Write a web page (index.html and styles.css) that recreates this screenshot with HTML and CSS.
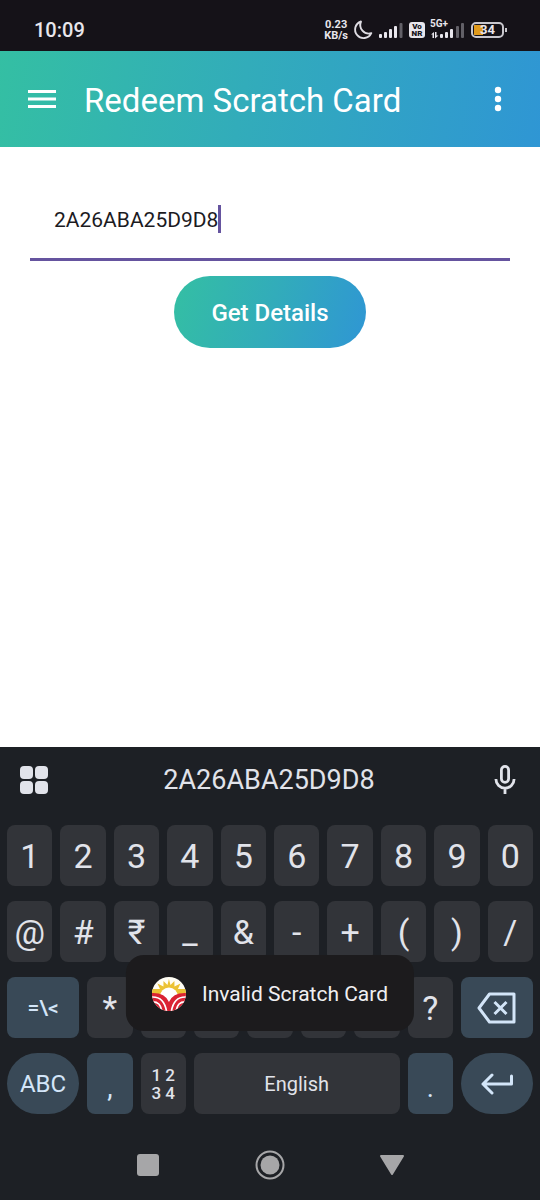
FILE: index.html
```html
<!DOCTYPE html>
<html lang="en">
<head>
<meta charset="utf-8">
<meta name="viewport" content="width=device-width, initial-scale=1">
<title>Redeem Scratch Card</title>
<link rel="stylesheet" href="styles.css">
</head>
<body>
<div class="status-bar">
  <span class="clock">10:09</span>
  <div class="status-icons">
    <span class="net-speed">0.23<br>KB/s</span>
    <svg class="moon" width="20" height="20" viewBox="0 0 20 20"><path d="M8 1.5A8.5 8.5 0 1 0 18.3 13.2A8.6 8.6 0 0 1 8 1.5Z" fill="none" stroke="#dedce2" stroke-width="1.9" stroke-linejoin="round"/></svg>
    <svg class="bars" width="26" height="18" viewBox="0 0 26 18"><g fill="#e8e6ec"><rect x="1" y="13" width="3" height="4" rx="1"/><rect x="6" y="11" width="3" height="6" rx="1"/><rect x="11" y="8" width="3" height="9" rx="1"/><rect x="16" y="5" width="3" height="12" rx="1"/></g><rect x="21.500" y="2" width="3" height="15" rx="1" fill="#626067"/></svg>
    <span class="volte"><span>Vo</span><span>NR</span></span>
    <span class="mobile">
      <span class="mobile-type">5G+</span>
      <svg width="36" height="18" viewBox="0 0 36 18"><g fill="#e8e6ec"><path d="M1 13.500L4 11V17H2.500V13.500ZM5 11H6.500V14.500H8.500L5 17.500Z"/><rect x="10" y="13" width="3" height="4" rx="1"/><rect x="15" y="11" width="3" height="6" rx="1"/><rect x="20" y="8" width="3" height="9" rx="1"/></g><g fill="#626067"><rect x="26" y="5" width="3" height="12" rx="1"/><rect x="31" y="2" width="3" height="15" rx="1"/></g></svg>
    </span>
    <span class="battery">34</span>
  </div>
</div>
<header class="app-bar">
  <button class="icon-button" aria-label="Menu"><svg width="28" height="20" viewBox="0 0 28 20" fill="#fff"><path d="M0 1h28v3H0zM0 8.500h28v3H0zM0 16h28v3H0z"/></svg></button>
  <h1 class="title">Redeem Scratch Card</h1>
  <button class="icon-button" aria-label="More options"><svg width="8" height="26" viewBox="0 0 8 26" fill="#fff"><circle cx="4" cy="4" r="3.200"/><circle cx="4" cy="13" r="3.200"/><circle cx="4" cy="22" r="3.200"/></svg></button>
</header>
<main class="content">
  <div class="field">
    <input class="field-input" type="text" value="2A26ABA25D9D8" aria-label="Scratch card number">
    <span class="caret"></span>
  </div>
  <button class="submit">Get Details</button>
</main>
<section class="keyboard" aria-label="Keyboard">
  <div class="suggestions">
    <button class="icon-button" aria-label="Keyboard tools"><svg width="30" height="30" viewBox="0 0 30 30" fill="#e1e3ea"><rect x="1" y="1" width="13" height="13" rx="4"/><rect x="16" y="1" width="13" height="13" rx="4"/><rect x="1" y="16" width="13" height="13" rx="4"/><rect x="16" y="16" width="13" height="13" rx="4"/></svg></button>
    <button class="suggestion">2A26ABA25D9D8</button>
    <button class="icon-button" aria-label="Voice input"><svg width="24" height="30" viewBox="0 0 24 30" fill="none" stroke="#e1e3ea" stroke-width="2.800"><rect x="8.400" y="1.400" width="7.200" height="16" rx="3.600"/><path d="M2.900 14a9.100 9.100 0 0 0 18.200 0M12 23V29"/></svg></button>
  </div>
  <div class="keys">
    <div class="key-row">
      <button class="key">1</button><button class="key">2</button><button class="key">3</button><button class="key">4</button><button class="key">5</button><button class="key">6</button><button class="key">7</button><button class="key">8</button><button class="key">9</button><button class="key">0</button>
    </div>
    <div class="key-row">
      <button class="key">@</button><button class="key">#</button><button class="key">₹</button><button class="key">_</button><button class="key">&amp;</button><button class="key">-</button><button class="key">+</button><button class="key">(</button><button class="key">)</button><button class="key">/</button>
    </div>
    <div class="key-row">
      <button class="key key-wide key-accent key-symbols">=\&lt;</button><button class="key">*</button><button class="key"></button><button class="key"></button><button class="key"></button><button class="key"></button><button class="key"></button><button class="key">?</button>
      <button class="key key-wide key-accent" aria-label="Backspace"><svg width="40" height="32" viewBox="0 0 40 32" fill="none" stroke="#d3e5f8" stroke-width="3" stroke-linejoin="round"><path d="M12.500 2H37V30H12.500L2 16Z"/><path d="M17.500 10L29.500 22M29.500 10L17.500 22"/></svg></button>
    </div>
    <div class="key-row">
      <button class="key key-wide key-accent key-round">ABC</button><button class="key key-accent key-punct">,</button><button class="key key-numpad">1 2<br>3 4</button><button class="key key-space">English</button><button class="key key-accent key-punct">.</button>
      <button class="key key-wide key-accent key-round" aria-label="Enter"><svg width="34" height="24" viewBox="0 0 34 24" fill="none" stroke="#d3e5f8" stroke-width="3" stroke-linecap="round" stroke-linejoin="round"><path d="M12 3L3 12L12 21M3 12H31.500V4"/></svg></button>
    </div>
  </div>
  <nav class="nav-bar">
    <button class="icon-button" aria-label="Recent apps"><svg width="30" height="30" viewBox="0 0 30 30"><rect x="4" y="4" width="22" height="22" rx="3" fill="#a6a6a8"/></svg></button>
    <button class="icon-button" aria-label="Home"><svg width="30" height="30" viewBox="0 0 30 30"><circle cx="15" cy="15" r="13.500" fill="none" stroke="#a6a6a8" stroke-width="2"/><circle cx="15" cy="15" r="9.500" fill="#a6a6a8"/></svg></button>
    <button class="icon-button" aria-label="Back"><svg width="30" height="30" viewBox="0 0 30 30"><path d="M4 6H26L15 24Z" fill="#a6a6a8" stroke="#a6a6a8" stroke-width="2" stroke-linejoin="round"/></svg></button>
  </nav>
  <div class="toast" role="status">
    <svg width="34" height="34" viewBox="0 0 34 34">
      <defs><clipPath id="disc"><circle cx="17" cy="17" r="17"/></clipPath></defs>
      <g clip-path="url(#disc)">
        <rect width="34" height="34" fill="#fffdf4"/>
        <path d="M17 2L18.500 8L22.500 4L22.500 9.500L28.500 6.500L26 12L34 12V19H0V12L8 12L5.500 6.500L11.500 9.500L11.500 4L15.500 8Z" fill="#ecc233"/>
        <circle cx="17" cy="19.500" r="9" fill="#fff"/>
        <path d="M0 16Q13 15.500 17 25Q21 15.500 34 16V34H0Z" fill="#da2333"/>
        <path d="M0 20Q12 19.500 14.500 34M34 20Q22 19.500 19.500 34M0 25Q9 24.500 9.500 34M34 25Q25 24.500 24.500 34" fill="none" stroke="#fff" stroke-width="1.700"/>
      </g>
    </svg>
    <span>Invalid Scratch Card</span>
  </div>
</section>
</body>
</html>
```
FILE: styles.css
```css
* { box-sizing: border-box; }

body {
  margin: 0;
  min-height: 100vh;
  display: flex;
  flex-direction: column;
  background: #fff;
  font-family: Roboto, "Noto Sans", sans-serif;
}

button {
  margin: 0;
  padding: 0;
  border: 0;
  background: none;
  color: inherit;
  font: inherit;
}

svg { display: block; }

.icon-button { flex: none; }

.status-bar {
  display: flex;
  align-items: center;
  justify-content: space-between;
  height: 51px;
  padding: 8px 36px 0 34px;
  background: #151218;
  color: #e8e6ec;
}

.clock { font-size: 20px; font-weight: 500; }

.status-icons {
  display: flex;
  align-items: center;
  gap: 5px;
}

.net-speed {
  font-size: 11px;
  line-height: 11px;
  font-weight: 700;
  text-align: center;
}

.volte {
  display: flex;
  flex-direction: column;
  align-items: center;
  justify-content: center;
  width: 16px;
  height: 16px;
  border-radius: 3px;
  background: #e8e6ec;
  color: #151218;
  font-size: 8px;
  line-height: 7px;
  font-weight: 900;
}

.mobile { position: relative; }

.mobile-type {
  position: absolute;
  top: -3px;
  left: 0;
  font-size: 10px;
  line-height: 12px;
  font-weight: 700;
}

.battery {
  position: relative;
  width: 33px;
  height: 16px;
  border: 2px solid #c9c7cd;
  border-radius: 5px;
  background: linear-gradient(90deg, #e09a1c 9px, transparent 9px) 1px 1px / 25px 10px no-repeat;
  font-size: 13px;
  line-height: 12px;
  font-weight: 700;
  text-align: center;
}

.battery::after {
  content: "";
  position: absolute;
  top: 4px;
  right: -5px;
  width: 2px;
  height: 4px;
  background: #c9c7cd;
}

.app-bar {
  display: flex;
  align-items: center;
  height: 96px;
  padding: 0 38px 0 28px;
  background: linear-gradient(100deg, #34bfa3, #32acba 45%, #2f96d4);
  color: #fff;
}

.title {
  flex: 1;
  margin: 0 0 0 28px;
  padding-top: 2px;
  font-size: 33px;
  font-weight: 400;
  white-space: nowrap;
}

.content {
  display: flex;
  flex: 1;
  flex-direction: column;
  align-items: center;
  padding: 33px 30px;
}

.field {
  display: flex;
  align-items: center;
  width: 100%;
  height: 81px;
  padding: 0 24px;
  border-bottom: 3px solid #65549f;
}

.field-input {
  min-width: 0;
  max-width: 100%;
  padding: 1px 0 0;
  border: 0;
  outline: 0;
  background: none;
  color: #1c1b1f;
  font: 21px Roboto, "Noto Sans", sans-serif;
  field-sizing: content;
}

.caret {
  width: 3px;
  height: 28px;
  background: #65549f;
}

.submit {
  height: 72px;
  margin-top: 15px;
  padding: 2px 37px 0;
  border-radius: 36px;
  background: linear-gradient(105deg, #34bfa3, #32acba 50%, #2f96d4);
  color: #fff;
  font-size: 24px;
  font-weight: 500;
}

.keyboard {
  position: relative;
  background: #1d2025;
  color: #e1e3ea;
}

.suggestions {
  display: flex;
  align-items: center;
  justify-content: space-between;
  height: 66px;
  padding: 0 23px 0 19px;
}

.suggestion { padding-right: 4px; font-size: 27px; }

.keys {
  display: flex;
  flex-direction: column;
  gap: 15px;
  padding: 12px 7px 0;
}

.key-row { display: flex; gap: 8px; }

.key {
  display: flex;
  flex: 2 1 0;
  align-items: center;
  justify-content: center;
  min-width: 0;
  height: 61px;
  border-radius: 8px;
  background: #323439;
  font-size: 34px;
}

.key-accent { background: #394957; color: #d3e5f8; }

.key-wide { flex: 3 1 4px; font-size: 24px; }

.key-symbols { font-size: 21px; font-weight: 500; }

.key-round { border-radius: 36px; }

.key-punct { align-items: flex-end; padding-bottom: 10px; font-size: 27px; }

.key-numpad {
  display: block;
  font-size: 17px;
  line-height: 18px;
  font-weight: 500;
}

.key-space { flex: 8 1 24px; font-size: 20px; }

.nav-bar {
  display: flex;
  justify-content: center;
  gap: 92px;
  padding: 36px 0 20px;
}

.toast {
  position: absolute;
  bottom: 169px;
  left: 50%;
  display: flex;
  align-items: center;
  gap: 16px;
  height: 76px;
  padding: 2px 26px 0;
  border-radius: 18px;
  transform: translateX(-50%);
  background: #1c1b1d;
  color: #f0f0f2;
  font-size: 21px;
  white-space: nowrap;
}
```
